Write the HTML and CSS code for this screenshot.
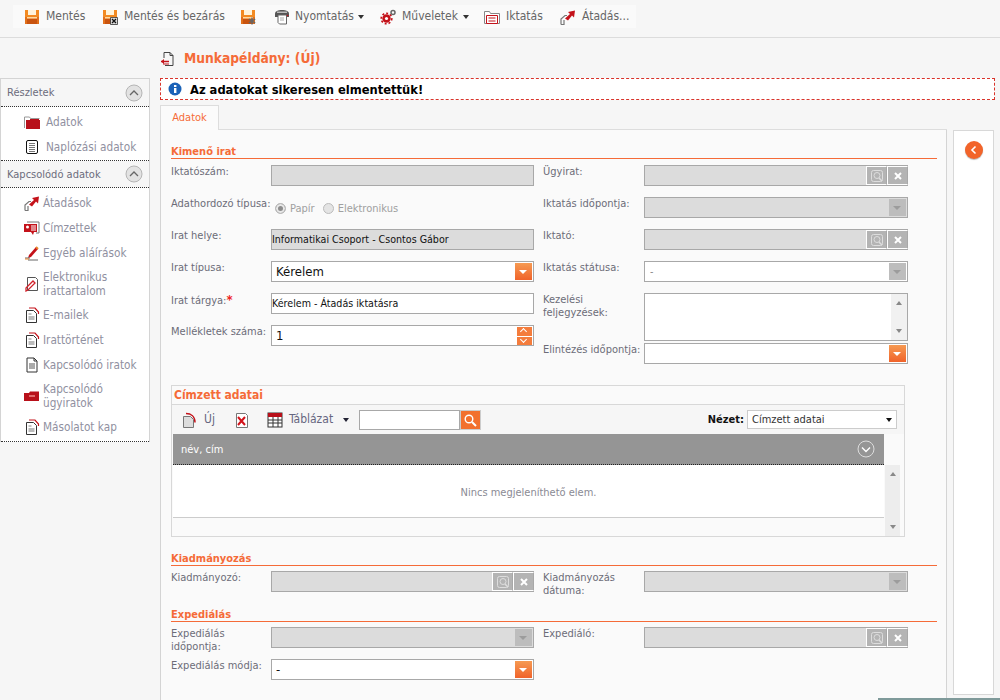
FILE: index.html
```html
<!DOCTYPE html>
<html lang="hu">
<head>
<meta charset="utf-8">
<title>Munkapéldány</title>
<link rel="stylesheet" href="styles.css">
</head>
<body>
<svg class="defs" aria-hidden="true">
  <symbol id="floppy" viewBox="0 0 16 16"><path d="M1 1h14v14H1z" fill="#f28a22"/><path d="M4 1h8v5H4z" fill="#fff4dc"/><path d="M1 8h14v7H1z" fill="#e2701a"/><path d="M3 10h10v5H3z" fill="#c9540f"/><path d="M3 8h10v1.500H3z" fill="#ffd9a0"/></symbol>
  <symbol id="doc" viewBox="0 0 16 16"><path d="M3 1h7l3 3v11H3z" fill="#fff" stroke="#333"/><path d="M10 1v3h3" fill="none" stroke="#333"/><path d="M5 7h6M5 9h6M5 11h6" stroke="#555"/></symbol>
  <symbol id="docred" viewBox="0 0 16 16"><path d="M2.500 3.500h7l3 3v9h-10z" fill="#fff" stroke="#333"/><path d="M5 1h6l3.500 4v2" fill="none" stroke="#c4121a" stroke-width="1.200"/><path d="M4.500 9h6v4h-6z" fill="#bbb"/><path d="M4.500 7h3" stroke="#888"/></symbol>
  <symbol id="handover" viewBox="0 0 16 16"><path d="M1 15.500V10l4-3.500h2M1 15.500h3V11" fill="none" stroke="#777" stroke-width="1.200"/><path d="M5 9.500l5-4.500-2-2 7-1.500-1 7-2-2-4 5z" fill="#c4121a"/></symbol>
  <symbol id="x" viewBox="0 0 10 10"><path d="M2 2l6 6M8 2l-6 6" stroke="#fff" stroke-width="2"/></symbol>
  <symbol id="look" viewBox="0 0 16 16"><rect x="2.500" y="2.500" width="11" height="11" rx="2" fill="none" stroke="#ddd"/><circle cx="8" cy="7.500" r="3" fill="none" stroke="#ddd"/><path d="M10 10l3 3" stroke="#ddd" stroke-width="1.500"/></symbol>
  <symbol id="chev-up" viewBox="0 0 18 18"><circle cx="9" cy="9" r="8" fill="#e2e2e2" stroke="#b5b5b5"/><path d="M5 11l4-4 4 4" fill="none" stroke="#666" stroke-width="1.300"/></symbol>
</svg>

<header class="top">
  <nav class="toolbar">
    <span class="tool t1"><svg class="ic16"><use href="#floppy"/></svg>Mentés</span>
    <span class="tool t2"><svg class="ic16" viewBox="0 0 16 16"><use href="#floppy"/><path d="M8.500 8.500h7v7h-7z" fill="#ddd" stroke="#333" stroke-width=".8"/><path d="M10 10l4 4M14 10l-4 4" stroke="#111" stroke-width="1.300"/></svg>Mentés és bezárás</span>
    <span class="tool t3"><svg class="ic16" viewBox="0 0 16 16"><use href="#floppy"/><path d="M12 8.500v7M8.800 10l6.400 4M15.200 10l-6.400 4" stroke="#666" stroke-width="1.400"/></svg></span>
    <span class="tool t4"><svg class="ic16" viewBox="0 0 16 16"><path d="M1 5c0-3 3-4 7-4s7 1 7 4v3H1z" fill="#555"/><path d="M3 2.500h10v1.500H3z" fill="#bbb"/><path d="M4 6h8.500v9H5.500L4 13.500z" fill="#fff" stroke="#666"/><path d="M6 9h4M6 11h4" stroke="#aaa"/><circle cx="13.500" cy="6.500" r=".8" fill="#c4121a"/></svg>Nyomtatás<i class="caret"></i></span>
    <span class="tool t5"><svg class="ic16" viewBox="0 0 16 16"><circle cx="6.500" cy="9.500" r="4.200" fill="#c4121a"/><circle cx="6.500" cy="9.500" r="5.300" fill="none" stroke="#c4121a" stroke-width="1.600" stroke-dasharray="2 2"/><circle cx="6.500" cy="9.500" r="1.600" fill="#fff"/><circle cx="13" cy="3.500" r="2" fill="none" stroke="#666" stroke-width="1.500"/></svg>Műveletek<i class="caret"></i></span>
    <span class="tool t6"><svg class="ic16" viewBox="0 0 16 16"><path d="M.5 14.500v-12h5l1 2h9v10z" fill="#fff" stroke="#888"/><path d="M2.500 6.500h11v8h-11z" fill="#fff" stroke="#c4121a"/><path d="M4.500 9h7M4.500 12h7" stroke="#c4121a"/></svg>Iktatás</span>
    <span class="tool t7"><svg class="ic16"><use href="#handover"/></svg>Átadás...</span>
  </nav>
</header>

<div class="main">
  <aside class="side">
    <div class="side-head">Részletek<svg class="toggle"><use href="#chev-up"/></svg></div>
    <ul class="side-list side-list-a">
      <li class="side-item"><svg class="ic16" viewBox="0 0 16 16"><path d="M.5 14V3h5l1 1.500h9" fill="none" stroke="#999"/><path d="M2 6h14v9H2z" fill="#b8101a"/><path d="M6 5h9v2H6z" fill="#b8101a"/></svg>Adatok</li>
      <li class="side-item"><svg class="ic16" viewBox="0 0 16 16"><rect x="2.500" y="1.500" width="11" height="13" rx="1.500" fill="#fff" stroke="#111"/><path d="M5 4.500h6M5 6.500h6M5 8.500h6M5 10.500h6M5 12.500h6" stroke="#777"/></svg>Naplózási adatok</li>
    </ul>
    <div class="side-head side-head-b">Kapcsolódó adatok<svg class="toggle"><use href="#chev-up"/></svg></div>
    <ul class="side-list side-list-b">
      <li class="side-item"><svg class="ic16"><use href="#handover"/></svg>Átadások</li>
      <li class="side-item"><svg class="ic16" viewBox="0 0 16 16"><path d="M3 2h12v11h-3" fill="none" stroke="#777"/><path d="M0 4h13v8h-3l-1 3-2-3H0z" fill="#c4121a"/><circle cx="3.500" cy="7" r="1.500" fill="#fff"/><path d="M7 6h5M7 8h5M7 10h5" stroke="#fff"/></svg>Címzettek</li>
      <li class="side-item"><svg class="ic16" viewBox="0 0 16 16"><path d="M5 10l7-8 2 2-7 8-3 1z" fill="#c4121a"/><path d="M12 2l2 2" stroke="#e8842a" stroke-width="2"/><path d="M1 13h5M4 15h10" stroke="#666"/><path d="M1 14h4" stroke="#e8842a"/></svg>Egyéb aláírások</li>
      <li class="side-item side-two"><svg class="ic16" viewBox="0 0 16 16"><path d="M3.500 1.500h8l2 2v11h-10z" fill="#fff" stroke="#555"/><path d="M2 12l7-7 2 2-7 7-2 1z" fill="none" stroke="#d2222a" stroke-width="1.300"/></svg><span>Elektronikus<br>irattartalom</span></li>
      <li class="side-item"><svg class="ic16"><use href="#docred"/></svg>E-mailek</li>
      <li class="side-item"><svg class="ic16"><use href="#docred"/></svg>Irattörténet</li>
      <li class="side-item"><svg class="ic16"><use href="#doc"/></svg>Kapcsolódó iratok</li>
      <li class="side-item side-two"><svg class="ic16" viewBox="0 0 16 16"><path d="M0 5h5l1-1.500h9V13H0z" fill="#b8101a"/><path d="M5 8h6" stroke="#e88" stroke-width="1.500"/></svg><span>Kapcsolódó<br>ügyiratok</span></li>
      <li class="side-item"><svg class="ic16"><use href="#docred"/></svg>Másolatot kap</li>
    </ul>
  </aside>

  <main class="content">
    <h1 class="title"><svg class="ic16" viewBox="0 0 16 16"><path d="M4 7V1.500h6l3 3v10H5" fill="none" stroke="#444"/><path d="M10 1.500v3h3" fill="none" stroke="#444"/><path d="M1 10.500h8" stroke="#c4121a" stroke-width="1.500"/><path d="M1 10.500l3-2.500v5z" fill="#c4121a"/><path d="M3 13h6" stroke="#c4121a"/></svg>Munkapéldány: (Új)</h1>
    <div class="msg"><svg class="ic14" viewBox="0 0 14 14"><circle cx="7" cy="7" r="6.500" fill="#1a62b8"/><rect x="6" y="6" width="2.400" height="5" fill="#fff"/><rect x="6" y="3" width="2.400" height="2" fill="#fff"/></svg>Az adatokat sikeresen elmentettük!</div>
    <div class="tabs"><span class="tab">Adatok</span></div>

    <div class="workspace">
      <section class="panel">
        <h2 class="sec sec-first">Kimenő irat</h2>
        <div class="cols">
          <div class="col col-l">
            <div class="row"><label class="lbl">Iktatószám:</label><div class="fld off"></div></div>
            <div class="row"><label class="lbl">Adathordozó típusa:</label><div class="radios"><i class="radio on"></i>Papír<i class="radio r2"></i>Elektronikus</div></div>
            <div class="row"><label class="lbl">Irat helye:</label><div class="fld off">Informatikai Csoport - Csontos Gábor</div></div>
            <div class="row"><label class="lbl">Irat típusa:</label><div class="fld big">Kérelem<i class="dd"></i></div></div>
            <div class="row"><label class="lbl">Irat tárgya:<b class="req">*</b></label><div class="fld">Kérelem - Átadás iktatásra</div></div>
            <div class="row"><label class="lbl">Mellékletek száma:</label><div class="fld big">1<i class="spin"><i class="sp sp-up"></i><i class="sp sp-down"></i></i></div></div>
          </div>
          <div class="col col-r">
            <div class="row"><label class="lbl">Ügyirat:</label><div class="fld off look"><i class="lk"><svg class="ic16"><use href="#look"/></svg></i><i class="lk"><svg class="ic10"><use href="#x"/></svg></i></div></div>
            <div class="row"><label class="lbl">Iktatás időpontja:</label><div class="fld off"><i class="dd dis"></i></div></div>
            <div class="row"><label class="lbl">Iktató:</label><div class="fld off look"><i class="lk"><svg class="ic16"><use href="#look"/></svg></i><i class="lk"><svg class="ic10"><use href="#x"/></svg></i></div></div>
            <div class="row"><label class="lbl">Iktatás státusa:</label><div class="fld dim">-<i class="dd dis"></i></div></div>
            <div class="row row-ta"><label class="lbl">Kezelési<br>feljegyzések:</label><div class="fld ta"><i class="tabar"><i class="up"></i><i class="dn"></i></i></div></div>
            <div class="row row-last"><label class="lbl">Elintézés időpontja:</label><div class="fld"><i class="dd"></i></div></div>
          </div>
        </div>

        <div class="box">
          <div class="box-title">Címzett adatai</div>
          <div class="box-tools">
            <svg class="ic16 t-new" viewBox="0 0 16 16"><path d="M2.500 4.500h7l3 3v8h-10z" fill="#ddd" stroke="#777"/><path d="M5 1.500c5 0 9 3 9 9" fill="none" stroke="#c4121a" stroke-width="1.500"/></svg>
            <span class="t-uj">Új</span>
            <svg class="ic16 t-del" viewBox="0 0 16 16"><path d="M2.500 1.500h9l2 2v12h-11z" fill="#fff" stroke="#777"/><path d="M4 5l7 8M11 5l-7 8" stroke="#d2121a" stroke-width="2"/></svg>
            <svg class="ic16 t-tbl" viewBox="0 0 16 16"><rect x="1" y="1" width="14" height="14" fill="#fff" stroke="#333"/><path d="M1 1h14v4H1z" fill="#b8101a"/><path d="M1 8h14M1 11h14M6 5v10M11 5v10" stroke="#333"/></svg>
            <span class="t-tab">Táblázat</span><i class="caret caret-d"></i>
            <div class="search"></div><div class="search-btn"><svg class="ic14" viewBox="0 0 14 14"><circle cx="6" cy="6" r="3.800" fill="none" stroke="#fff" stroke-width="1.400"/><path d="M9 9l4 4" stroke="#fff" stroke-width="2"/></svg></div>
            <b class="view-l">Nézet:</b>
            <div class="view">Címzett adatai<i class="caret caret-v"></i></div>
          </div>
          <div class="grid-wrap">
            <div class="grid-main">
              <div class="grid-head">név, cím<svg class="toggle-w" viewBox="0 0 18 18"><circle cx="9" cy="9" r="8" fill="none" stroke="#ddd"/><path d="M5 7.500l4 4 4-4" fill="none" stroke="#fff" stroke-width="1.400"/></svg></div>
              <div class="grid-body">Nincs megjeleníthető elem.</div>
              <div class="grid-foot"></div>
            </div>
            <div class="grid-scroll"><i class="up"></i><i class="dn"></i></div>
          </div>
        </div>

        <h2 class="sec sec-kiad">Kiadmányozás</h2>
        <div class="cols">
          <div class="col col-l"><div class="row"><label class="lbl">Kiadmányozó:</label><div class="fld off look"><i class="lk"><svg class="ic16"><use href="#look"/></svg></i><i class="lk"><svg class="ic10"><use href="#x"/></svg></i></div></div></div>
          <div class="col col-r"><div class="row"><label class="lbl">Kiadmányozás<br>dátuma:</label><div class="fld off"><i class="dd dis"></i></div></div></div>
        </div>

        <h2 class="sec sec-exp">Expediálás</h2>
        <div class="cols">
          <div class="col col-l">
            <div class="row row-two"><label class="lbl">Expediálás<br>időpontja:</label><div class="fld off"><i class="dd dis"></i></div></div>
            <div class="row"><label class="lbl">Expediálás módja:</label><div class="fld big">-<i class="dd"></i></div></div>
          </div>
          <div class="col col-r"><div class="row"><label class="lbl">Expediáló:</label><div class="fld off look"><i class="lk"><svg class="ic16"><use href="#look"/></svg></i><i class="lk"><svg class="ic10"><use href="#x"/></svg></i></div></div></div>
        </div>
      </section>

      <aside class="rail"><span class="rail-btn"><svg class="ic10" viewBox="0 0 10 10"><path d="M6.500 1.500L3 5l3.500 3.500" fill="none" stroke="#fff" stroke-width="1.600"/></svg></span></aside>
    </div>
  </main>
</div>
<div class="status"></div>
</body>
</html>
```
FILE: styles.css
```css
html, body { margin: 0; padding: 0; }
body { width: 1000px; height: 700px; overflow: hidden; position: relative; background: #f6f6f6; font: 11px/13px "DejaVu Sans Condensed", "DejaVu Sans", sans-serif; font-stretch: condensed; color: #6c6c78; }
.defs { position: absolute; width: 0; height: 0; }
i { font-style: normal; }
svg { display: block; flex: none; }
.ic16 { width: 16px; height: 16px; }
.ic14 { width: 14px; height: 14px; }
.ic10 { width: 10px; height: 10px; }

.top { height: 32px; padding-top: 5px; border-bottom: 1px solid #dcdcdc; }
.toolbar { display: flex; align-items: center; width: 612px; height: 23px; margin-left: 13px; padding-left: 11px; background: #fafafa; font-size: 12px; color: #666; white-space: nowrap; }
.tool { display: flex; align-items: center; gap: 6px; }
.t1 { width: 78px; }
.t2 { width: 138px; }
.t3 { width: 34px; }
.t4 { width: 106px; gap: 5px; }
.t5 { width: 104px; }
.t6 { width: 76px; }
.caret { display: block; width: 0; height: 0; border: 3px solid transparent; border-top: 4px solid #333; border-bottom: 0; margin-left: -1px; }

.main { display: flex; align-items: flex-start; }
.side { width: 148px; margin-top: 40px; background: #fff; border: 1px solid #d4d4d4; border-bottom: 0; font-size: 11.700px; flex: none; white-space: nowrap; }
.side-head { display: flex; justify-content: space-between; align-items: center; height: 27px; padding: 0 6px; background: #f6f6f6; border-bottom: 1px dotted #333; color: #6c6c7c; font-size: 11px; }
.side-head-b { height: 26px; }
.toggle { width: 18px; height: 18px; }
.side-list { list-style: none; margin: 0; }
.side-list-a { padding: 2px 0 1px 23px; border-bottom: 1px dotted #333; }
.side-list-b { padding: 2px 0 2px 23px; border-bottom: 1px dotted #333; }
.side-list-a .side-item { gap: 6px; }
.side-list-b .side-item { gap: 3px; }
.side-item { display: flex; align-items: center; min-height: 25px; line-height: 14px; color: #9090a0; }
.side-two { min-height: 37px; }

.content { width: 835px; margin-left: 10px; flex: none; }
.title { display: flex; align-items: center; gap: 8px; height: 40px; margin: 0; padding-top: 1px; box-sizing: border-box; font-size: 13.700px; font-weight: 700; color: #f56b38; }
.msg { display: flex; align-items: center; gap: 8px; height: 22px; padding-left: 7px; box-sizing: border-box; border: 1px dashed #d9342b; background: #fff; font-size: 12.800px; font-weight: 700; color: #000; }
.tabs { display: flex; margin-top: 5px; width: 787px; height: 24px; border-bottom: 1px solid #ddd; }
.tab { width: 59px; height: 25px; box-sizing: border-box; padding-top: 5px; text-align: center; border: 1px solid #ddd; border-bottom: 0; background: #fbfbfb; color: #f56b38; }

.workspace { display: flex; gap: 6px; }
.panel { width: 775px; height: 570px; padding-left: 10px; background: #fafafa; border-left: 1px solid #d4d4d4; border-right: 1px solid #d4d4d4; }
.sec { width: 766px; height: 14px; margin: 0; box-sizing: border-box; border-bottom: 1px solid #f56b38; font-size: 11px; line-height: 13px; font-weight: 700; color: #f56b38; }
.sec-first { margin-top: 15px; margin-bottom: 6px; }
.sec-kiad { margin-top: 15px; margin-bottom: 5px; }
.sec-exp { margin-top: 11px; margin-bottom: 5px; }
.cols { display: flex; align-items: flex-start; }
.col-l { width: 372px; }
.col-r { width: 365px; }
.row { display: flex; margin-bottom: 11px; }
.row-two { margin-bottom: 6px; }
.row-ta { margin-bottom: 2px; }
.row:last-child { margin-bottom: 0; }
.lbl { width: 100px; flex: none; white-space: nowrap; }
.col-r .lbl { width: 101px; }
.req { color: #e22; font-size: 13px; }
.fld { position: relative; display: flex; align-items: center; width: 263px; height: 21px; box-sizing: border-box; padding-left: 0; border: 1px solid #a8a8a8; background: #fff; color: #111; font-size: 10.600px; }
.col-r .fld { width: 264px; }
.off { background: #dcdcdc; }
.big { padding-left: 4px; font-size: 13px; }
.dim { padding-left: 5px; color: #888; }
.radios { display: flex; align-items: center; height: 21px; padding-top: 2px; box-sizing: border-box; color: #a0a0a0; }
.radio { display: block; width: 11px; height: 11px; margin: 0 4px; box-sizing: border-box; border: 1px solid #bbb; border-radius: 50%; background: #e4e4e4; }
.radio.on { background: #8c8c8c; box-shadow: inset 0 0 0 2px #e8e8e8; }
.radio.r2 { margin-left: 8px; }
.dd { position: absolute; top: 1px; right: 1px; width: 17px; height: 17px; background: linear-gradient(#f69a52, #f0632a); }
.dd::after { content: ""; position: absolute; left: 4px; top: 7px; border: 4px solid transparent; border-top: 4px solid #fff; border-bottom: 0; }
.dd.dis { background: #bdbdbd; }
.dd.dis::after { border-top-color: #9c9c9c; }
.spin { position: absolute; right: 1px; top: 1px; width: 15px; height: 18px; display: flex; flex-direction: column; gap: 1px; }
.sp { flex: 1; background: #f47c3c; position: relative; }
.sp::after { content: ""; position: absolute; left: 4px; top: 2px; width: 4px; height: 4px; border-left: 1px solid #fff; border-top: 1px solid #fff; transform: rotate(45deg); }
.sp-down::after { transform: rotate(225deg); top: 0; }
.look { justify-content: flex-end; border-right-width: 0; }
.lk { display: flex; align-items: center; justify-content: center; width: 21px; height: 19px; box-sizing: border-box; border: 1px solid #fff; border-right: 1px solid #a8a8a8; background: #b4b4b4; }
.col-r .ta { height: 48px; }
.tabar { position: absolute; top: 0; right: 0; bottom: 0; width: 16px; background: #f1f1f1; }
.up, .dn { position: absolute; left: 5px; border: 3px solid transparent; }
.up { top: 7px; border-bottom: 4px solid #888; border-top: 0; }
.dn { bottom: 7px; border-top: 4px solid #888; border-bottom: 0; }

.box { width: 732px; height: 150px; margin-top: 21px; border: 1px solid #d8d8d8; display: flex; flex-direction: column; }
.box-title { height: 18px; padding-left: 2px; border-bottom: 1px solid #d8d8d8; font-size: 12px; line-height: 19px; font-weight: 700; color: #f56b38; }
.box-tools { position: relative; display: flex; align-items: center; height: 29px; background: #f6f6f6; color: #666680; font-size: 12px; }
.t-new { margin-left: 9px; }
.t-uj { margin-left: 7px; }
.t-del { margin-left: 19px; }
.t-tbl { margin-left: 17px; }
.t-tab { margin-left: 6px; width: 46px; }
.caret-d { margin-left: 8px; border-top-color: #223; }
.search { width: 101px; height: 20px; box-sizing: border-box; margin-left: 10px; border: 1px solid #a8a8a8; background: #fff; }
.search-btn { display: flex; align-items: center; justify-content: center; width: 21px; height: 20px; box-sizing: border-box; border: 1px solid #ccc; background: #f2702e; }
.view-l { margin-left: auto; margin-right: 3px; font-size: 11px; color: #111; }
.view { position: relative; display: flex; align-items: center; width: 150px; height: 19px; margin-right: 7px; box-sizing: border-box; padding-left: 4px; border: 1px solid #ccc; background: #fff; color: #333; font-size: 11px; }
.caret-v { position: absolute; right: 4px; top: 7px; border-top-color: #111; }
.grid-wrap { display: flex; flex: 1; min-height: 0; padding-left: 1px; }
.grid-main { width: 711px; display: flex; flex-direction: column; }
.grid-head { display: flex; justify-content: space-between; align-items: center; height: 31px; box-sizing: border-box; padding: 0 9px 0 8px; background: #959595; border-bottom: 1px dotted #222; color: #fff; }
.toggle-w { width: 18px; height: 18px; }
.grid-body { height: 53px; box-sizing: border-box; padding-top: 2px; display: flex; align-items: center; justify-content: center; background: #fff; color: #8a8a94; border-bottom: 1px solid #ccc; }
.grid-foot { flex: 1; }
.grid-scroll { position: relative; width: 15px; margin: 31px 0 0 1px; background: #ededed; }

.rail { width: 39px; height: 553px; padding-top: 10px; background: #fff; border: 1px solid #d8d8d8; display: flex; justify-content: center; }
.rail-btn { display: flex; align-items: center; justify-content: center; width: 18px; height: 18px; border-radius: 50%; background: #f2642a; box-shadow: 0 1px 1px #bbb; }
.status { position: absolute; right: 0; bottom: 0; width: 122px; height: 2px; background: #7f9a9a; }
```
